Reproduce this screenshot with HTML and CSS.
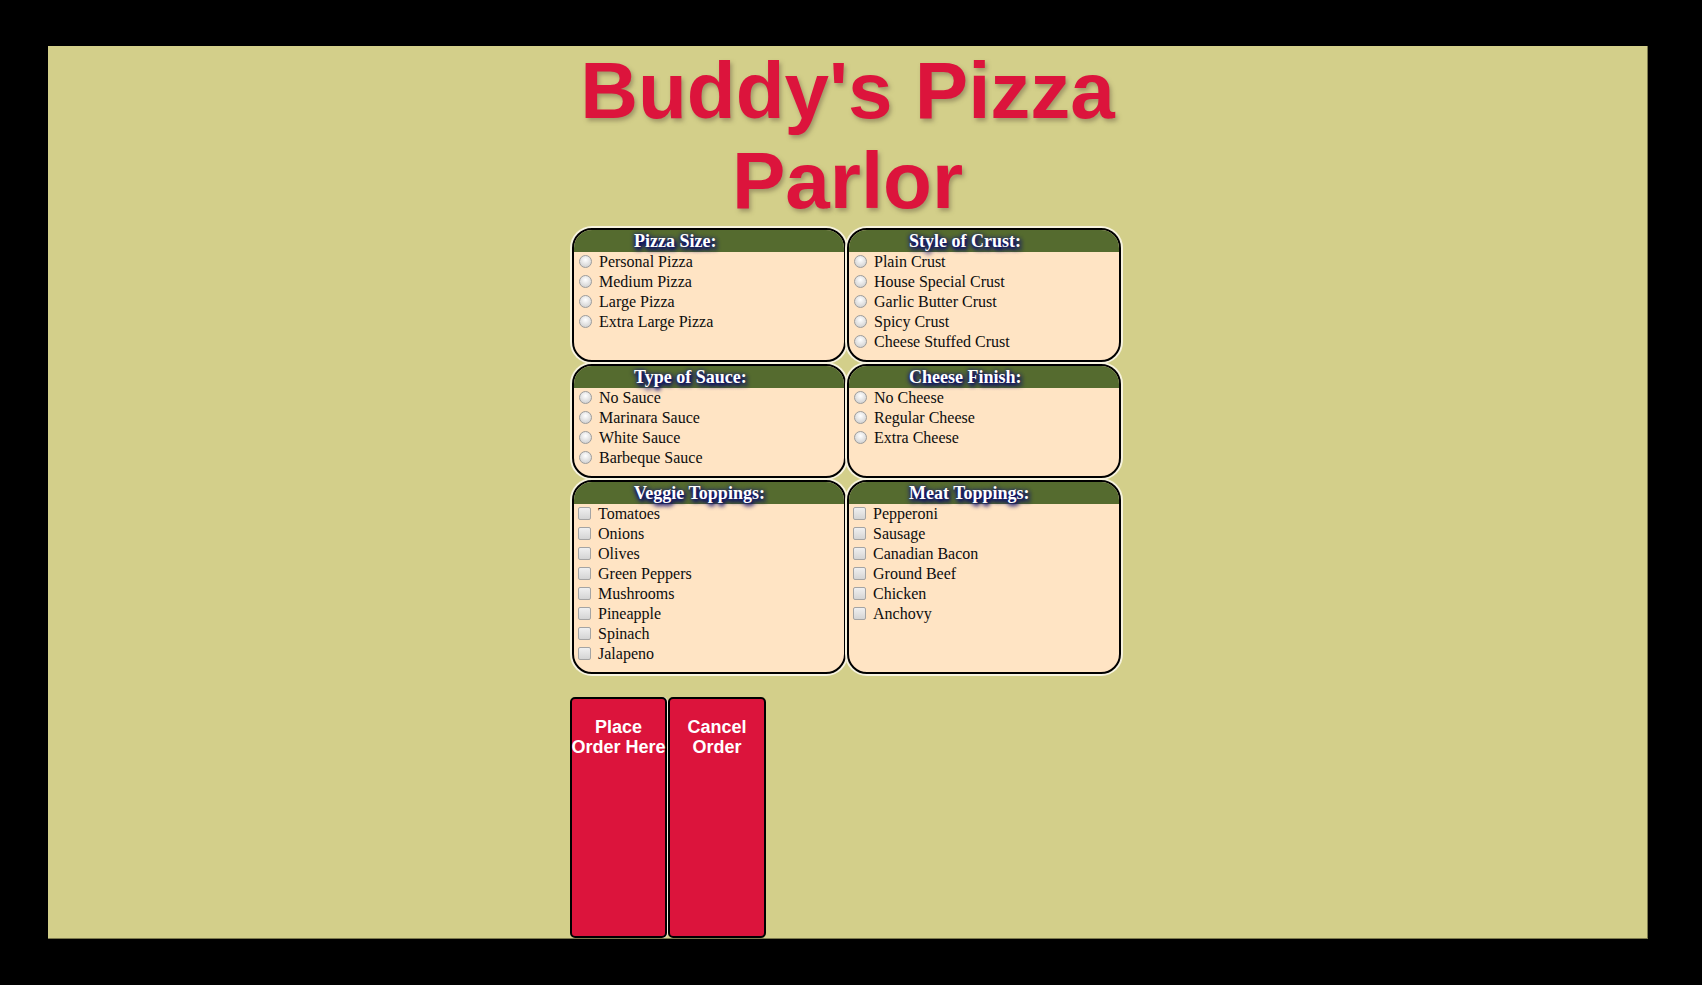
FILE: index.html
```html
<!DOCTYPE html>
<html lang="en">
<head>
<meta charset="utf-8">
<title>Buddy's Pizza Parlor</title>
<link rel="stylesheet" href="styles.css">
</head>
<body>
<div class="page">
  <form class="order">
    <h1 class="title">Buddy's Pizza Parlor</h1>
    <div class="grid">
      <section class="panel">
        <h2 class="panel-head">Pizza Size:</h2>
        <div class="panel-body">
          <label class="opt"><input type="radio" name="size" class="radio">Personal Pizza</label>
          <label class="opt"><input type="radio" name="size" class="radio">Medium Pizza</label>
          <label class="opt"><input type="radio" name="size" class="radio">Large Pizza</label>
          <label class="opt"><input type="radio" name="size" class="radio">Extra Large Pizza</label>
        </div>
      </section>
      <section class="panel">
        <h2 class="panel-head">Style of Crust:</h2>
        <div class="panel-body">
          <label class="opt"><input type="radio" name="crust" class="radio">Plain Crust</label>
          <label class="opt"><input type="radio" name="crust" class="radio">House Special Crust</label>
          <label class="opt"><input type="radio" name="crust" class="radio">Garlic Butter Crust</label>
          <label class="opt"><input type="radio" name="crust" class="radio">Spicy Crust</label>
          <label class="opt"><input type="radio" name="crust" class="radio">Cheese Stuffed Crust</label>
        </div>
      </section>
      <section class="panel">
        <h2 class="panel-head">Type of Sauce:</h2>
        <div class="panel-body">
          <label class="opt"><input type="radio" name="sauce" class="radio">No Sauce</label>
          <label class="opt"><input type="radio" name="sauce" class="radio">Marinara Sauce</label>
          <label class="opt"><input type="radio" name="sauce" class="radio">White Sauce</label>
          <label class="opt"><input type="radio" name="sauce" class="radio">Barbeque Sauce</label>
        </div>
      </section>
      <section class="panel">
        <h2 class="panel-head">Cheese Finish:</h2>
        <div class="panel-body">
          <label class="opt"><input type="radio" name="cheese" class="radio">No Cheese</label>
          <label class="opt"><input type="radio" name="cheese" class="radio">Regular Cheese</label>
          <label class="opt"><input type="radio" name="cheese" class="radio">Extra Cheese</label>
        </div>
      </section>
      <section class="panel">
        <h2 class="panel-head">Veggie Toppings:</h2>
        <div class="panel-body">
          <label class="opt"><input type="checkbox" class="check">Tomatoes</label>
          <label class="opt"><input type="checkbox" class="check">Onions</label>
          <label class="opt"><input type="checkbox" class="check">Olives</label>
          <label class="opt"><input type="checkbox" class="check">Green Peppers</label>
          <label class="opt"><input type="checkbox" class="check">Mushrooms</label>
          <label class="opt"><input type="checkbox" class="check">Pineapple</label>
          <label class="opt"><input type="checkbox" class="check">Spinach</label>
          <label class="opt"><input type="checkbox" class="check">Jalapeno</label>
        </div>
      </section>
      <section class="panel">
        <h2 class="panel-head">Meat Toppings:</h2>
        <div class="panel-body">
          <label class="opt"><input type="checkbox" class="check">Pepperoni</label>
          <label class="opt"><input type="checkbox" class="check">Sausage</label>
          <label class="opt"><input type="checkbox" class="check">Canadian Bacon</label>
          <label class="opt"><input type="checkbox" class="check">Ground Beef</label>
          <label class="opt"><input type="checkbox" class="check">Chicken</label>
          <label class="opt"><input type="checkbox" class="check">Anchovy</label>
        </div>
      </section>
    </div>
    <div class="actions">
      <button type="submit" class="btn btn-place">Place<br>Order Here</button>
      <button type="reset" class="btn btn-cancel">Cancel<br>Order</button>
    </div>
  </form>
</div>
</body>
</html>
```

FILE: styles.css
```css
html, body {
  margin: 0;
  padding: 0;
  background: #000;
}

body {
  padding: 46px 0 0 48px;
}

.page {
  box-sizing: border-box;
  width: 1600px;
  height: 893px;
  background: #d3cf8a;
  border-right: 1px solid #7c7a4e;
  border-bottom: 1px solid #7c7a4e;
  display: flex;
  flex-direction: column;
  align-items: center;
}

.order {
  width: 551px;
  flex: 1;
  display: flex;
  flex-direction: column;
}

.title {
  margin: 0;
  font-family: "Liberation Sans", Arial, sans-serif;
  font-weight: bold;
  font-size: 80px;
  line-height: 90px;
  text-align: center;
  color: #dc143c;
  text-shadow: 2px 3px 4px rgba(110, 95, 70, 0.5);
}

.grid {
  margin-top: 2px;
  display: grid;
  grid-template-columns: 274px 274px;
  column-gap: 1px;
  row-gap: 2px;
  align-items: stretch;
}

.panel {
  background: #ffe4c4;
  border: 2px solid #000;
  border-radius: 20px;
  overflow: hidden;
  box-shadow: 0 0 0 2px #f7f3df;
  padding-bottom: 8px;
}

.panel-head {
  margin: 0;
  height: 22px;
  box-sizing: border-box;
  padding: 1px 0 0 60px;
  background: #556b2f;
  color: #fff;
  font-family: "Liberation Serif", "Times New Roman", serif;
  font-weight: bold;
  font-size: 18px;
  line-height: 21px;
  text-shadow: 2px 3px 4px #000060, 0 0 4px #16167a, 0 2px 5px #1a1a80;
}

.panel-body {
  display: flex;
  flex-direction: column;
}

.opt {
  display: flex;
  align-items: flex-start;
  height: 20px;
  font-family: "Liberation Serif", "Times New Roman", serif;
  font-size: 16px;
  line-height: 20px;
  color: #0d0d0d;
}

.radio {
  appearance: none;
  -webkit-appearance: none;
  flex: none;
  box-sizing: border-box;
  width: 13px;
  height: 13px;
  margin: 3px 7px 0 5px;
  border-radius: 50%;
  border: 1px solid #9c9c9c;
  background: radial-gradient(circle at 50% 35%, #ffffff 0, #e6e6e6 45%, #c8c8c8 100%);
}

.check {
  appearance: none;
  -webkit-appearance: none;
  flex: none;
  box-sizing: border-box;
  width: 13px;
  height: 13px;
  margin: 3px 7px 0 4px;
  border-radius: 2px;
  border: 1px solid #a4a4a4;
  background: linear-gradient(#f0f0f0, #d4d4d4);
}

.actions {
  flex: 1;
  display: flex;
  align-items: stretch;
  gap: 1px;
  margin-top: 23px;
  margin-left: -2px;
}

.btn {
  box-sizing: border-box;
  display: flex;
  flex-direction: column;
  justify-content: flex-start;
  align-items: center;
  margin: 0;
  padding: 18px 0 0;
  background: #dc143c;
  color: #fff;
  border: 2px solid #000;
  border-radius: 5px;
  font-family: "Liberation Sans", Arial, sans-serif;
  font-weight: bold;
  font-size: 18px;
  line-height: 20px;
  white-space: nowrap;
  text-align: center;
}

.btn-place {
  width: 97px;
  box-shadow: 1px 0 0 #f2ece0;
}

.btn-cancel {
  width: 98px;
}
```
